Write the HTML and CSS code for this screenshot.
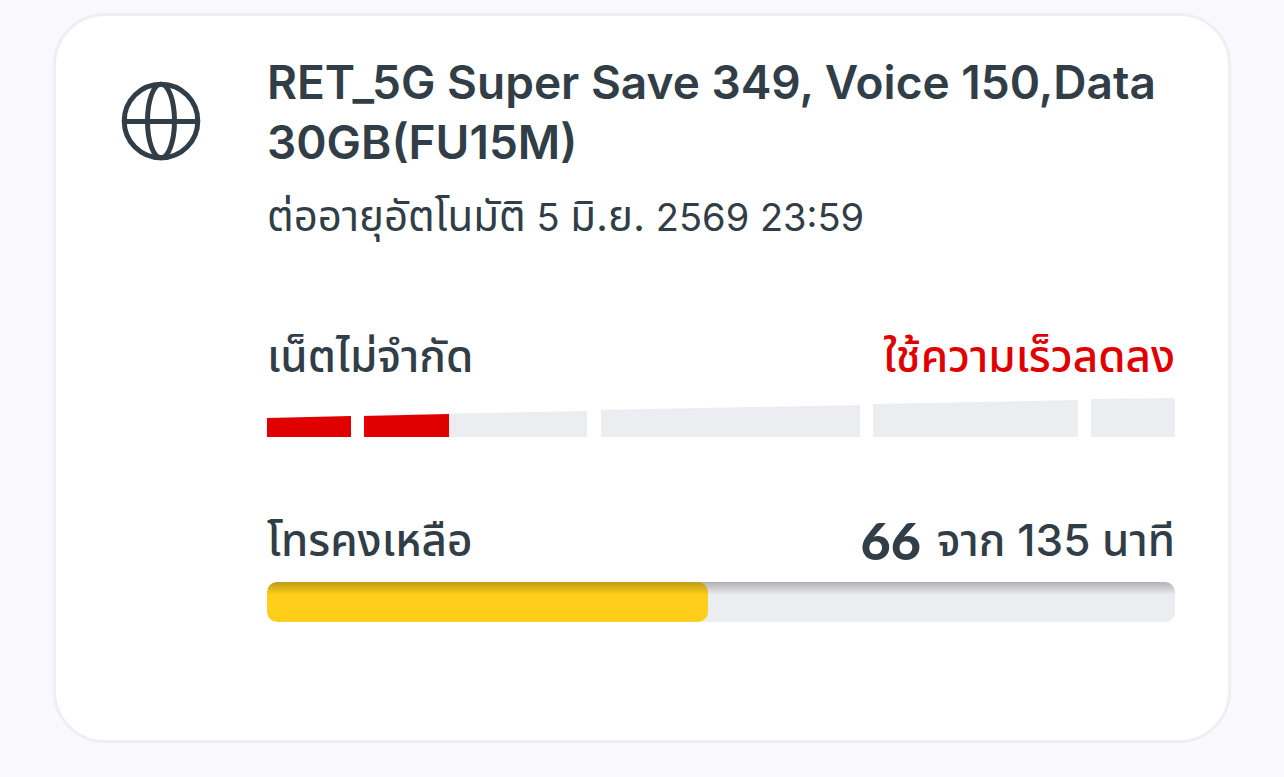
FILE: index.html
```html
<!DOCTYPE html>
<html lang="th">
<head>
<meta charset="utf-8">
<meta name="viewport" content="width=device-width, initial-scale=1">
<title>RET_5G Super Save 349</title>
<link rel="stylesheet" href="styles.css">
</head>
<body>
<main class="card">
  <svg class="globe" viewBox="0 0 80 80" aria-hidden="true">
    <circle cx="40" cy="40" r="36.8"/>
    <ellipse cx="40" cy="40" rx="13.5" ry="36.8"/>
    <path d="M3 40.5H78"/>
  </svg>
  <div class="content">
    <h1 class="title">RET_5G Super Save 349, Voice 150,Data 30GB(FU15M)</h1>
    <p class="renewal"><span class="thai">ต่ออายุอัตโนมัติ</span> 5 <span class="thai">มิ.ย.</span> 2569 23:59</p>
    <section class="usage">
      <div class="row">
        <h2 class="label">เน็ตไม่จำกัด</h2>
        <p class="label alert">ใช้ความเร็วลดลง</p>
      </div>
      <svg class="speed" viewBox="0 0 908 40" preserveAspectRatio="none" aria-hidden="true">
        <path class="track" d="M97 17L320 13V39H97ZM334 12L593 7V39H334ZM606 6L811 2V39H606ZM824 1L908 0V39H824Z"/>
        <path class="used" d="M0 20L84 18V39H0ZM97 18L182 16V39H97Z"/>
      </svg>
    </section>
    <section class="voice">
      <div class="row">
        <h2 class="label">โทรคงเหลือ</h2>
        <p class="label quota"><strong class="amount">66</strong> <span>จาก 135 นาที</span></p>
      </div>
      <div class="meter"><div class="fill" style="width:48.6%"></div></div>
    </section>
  </div>
</main>
</body>
</html>
```
FILE: styles.css
```css
* { box-sizing: border-box; }
body {
  margin: 0;
  padding: 13px 53px 34px;
  background: #f9f9fd;
  color: #313d47;
  font-family: Inter, "Noto Sans Thai", "Noto Sans", sans-serif;
}
h1, h2, p { margin: 0; }
.card {
  display: flex;
  gap: 66px;
  padding: 36px 53px 118px 65px;
  background: #fff;
  border: 3px solid #efeff1;
  border-radius: 52px;
}
.globe {
  flex: none;
  width: 80px;
  height: 80px;
  margin-top: 29px;
  fill: none;
  stroke: #313d47;
  stroke-width: 5;
}
.content { flex: 1; min-width: 0; }
.title { font-size: 46px; line-height: 60px; font-weight: 600; }
.renewal { height: 56px; margin-top: 16px; font-size: 38px; line-height: 56px; }
.thai { font-size: 42px; }
.usage { margin-top: 82px; }
.voice { margin-top: 72px; }
.row { display: flex; justify-content: space-between; height: 60px; }
.label { font-size: 44px; line-height: 60px; font-weight: 500; white-space: nowrap; }
.alert { color: #e10000; }
.quota { display: flex; align-items: center; gap: 16px; }
.amount { font-family: Lato, Inter, sans-serif; font-size: 52px; font-weight: 900; }
.speed { display: block; width: 100%; height: 40px; margin-top: 12px; }
.track { fill: #ecedf1; }
.used { fill: #e10000; }
.meter {
  height: 40px;
  margin-top: 12px;
  overflow: hidden;
  border-radius: 10px;
  background: linear-gradient(rgba(0, 0, 0, 0.25), transparent 13px) #ecedf1;
}
.fill {
  height: 100%;
  border-radius: 10px;
  background: linear-gradient(rgba(0, 0, 0, 0.25), transparent 13px) #ffce1b;
}
```
